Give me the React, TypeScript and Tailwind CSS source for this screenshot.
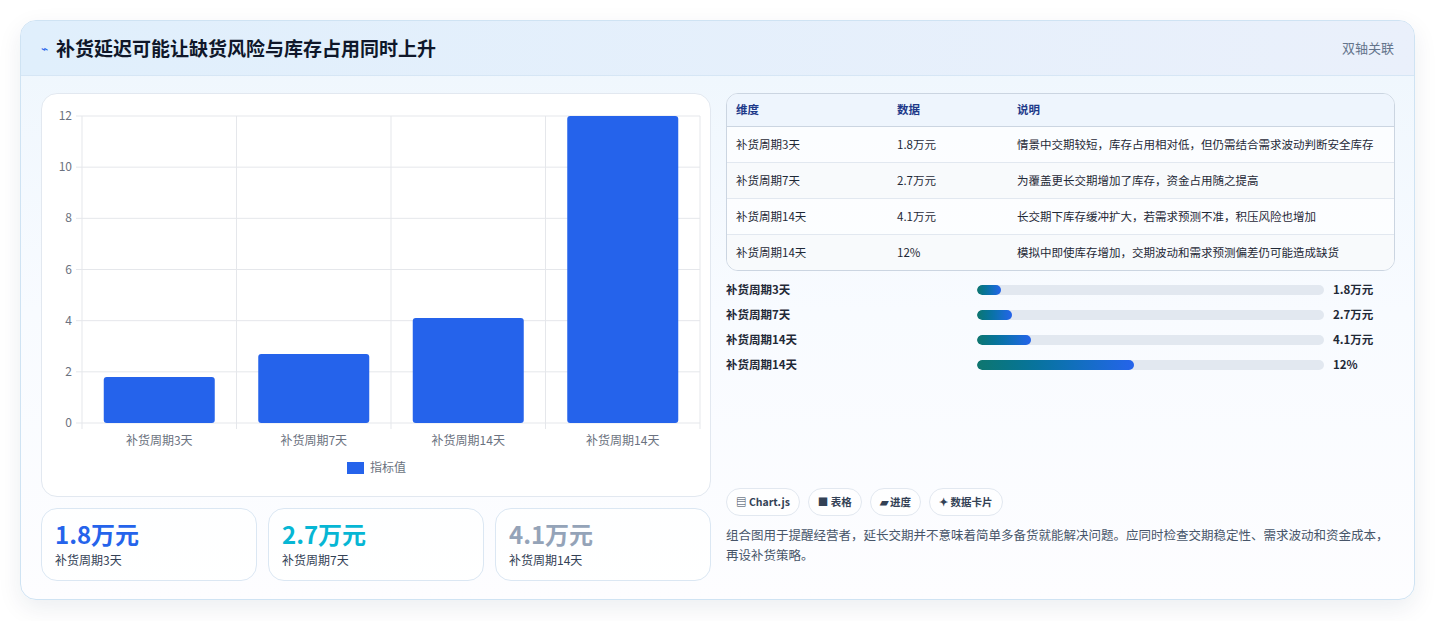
const font = { fontFamily: '"Noto Sans CJK SC", "Noto Sans", sans-serif' }

const rows = [
  { k: '补货周期3天', v: '1.8万元', d: '情景中交期较短，库存占用相对低，但仍需结合需求波动判断安全库存', p: 6.9 },
  { k: '补货周期7天', v: '2.7万元', d: '为覆盖更长交期增加了库存，资金占用随之提高', p: 10.1 },
  { k: '补货周期14天', v: '4.1万元', d: '长交期下库存缓冲扩大，若需求预测不准，积压风险也增加', p: 15.6 },
  { k: '补货周期14天', v: '12%', d: '模拟中即使库存增加，交期波动和需求预测偏差仍可能造成缺货', p: 45.2 },
]

function Chart() {
  const x0 = 40, x1 = 658, y0 = 22, y1 = 329
  const h = y1 - y0
  const vals = [1.8, 2.7, 4.1, 12]
  const labels = ['补货周期3天', '补货周期7天', '补货周期14天', '补货周期14天']
  const cw = (x1 - x0) / 4
  return (
    <svg width="670" height="402" className="block">
      {[0, 2, 4, 6, 8, 10, 12].map((t) => {
        const y = y1 - (t / 12) * h
        return (
          <g key={t}>
            <line x1={x0 - 6} x2={x1} y1={y} y2={y} stroke="#e5e7eb" />
            <text x={x0 - 10} y={y + 4} textAnchor="end" fontSize="12" fill="#6b7280" style={font}>{t}</text>
          </g>
        )
      })}
      {[0, 1, 2, 3, 4].map((i) => (
        <line key={i} x1={x0 + i * cw} x2={x0 + i * cw} y1={y0} y2={y1 + 6} stroke="#e5e7eb" />
      ))}
      {vals.map((v, i) => {
        const bh = (v / 12) * h
        const cx = x0 + cw * i + cw / 2
        return (
          <g key={i}>
            <rect x={cx - 55.5} y={y1 - bh} width="111" height={bh} rx="3" fill="#2563eb" />
            <text x={cx} y={y1 + 22} textAnchor="middle" fontSize="12" fill="#6b7280" style={font}>{labels[i]}</text>
          </g>
        )
      })}
      <rect x="305" y="368" width="17" height="12" fill="#2563eb" />
      <text x="328" y="378" fontSize="12" fill="#6b7280" style={font}>指标值</text>
    </svg>
  )
}

export default function App() {
  return (
    <div className="w-[1435px] h-[621px] bg-white pt-5 pl-5" style={font}>
      <div className="w-[1395px] h-[580px] rounded-2xl border border-[#cfe3f3] overflow-hidden bg-gradient-to-b from-[#eef6fd] via-[#f8fbff] to-[#fdfdff] shadow-[0_8px_24px_rgba(15,40,80,0.08)]">
        <div className="h-[55px] flex items-center justify-between px-5 bg-gradient-to-r from-[#e0effc] to-[#eaf0fb] border-b border-[#d6e6f5]">
          <div className="flex items-center gap-2">
            <span className="text-[#2563eb] text-xs">⌁</span>
            <span className="text-[19px] font-bold text-[#0f172a]">补货延迟可能让缺货风险与库存占用同时上升</span>
          </div>
          <span className="text-[13px] text-[#64748b]">双轴关联</span>
        </div>
        <div className="flex gap-[15px] px-5 pt-[17px]">
          <div className="w-[670px] flex flex-col gap-[11px]">
            <div className="h-[404px] rounded-2xl border border-[#e2e8f0] bg-white overflow-hidden">
              <Chart />
            </div>
            <div className="flex gap-[11px]">
              {[
                ['1.8万元', 'text-[#2563eb]', '补货周期3天'],
                ['2.7万元', 'text-[#06b6d4]', '补货周期7天'],
                ['4.1万元', 'text-[#94a3b8]', '补货周期14天'],
              ].map(([v, c, l]) => (
                <div key={v} className="w-[216px] h-[73px] rounded-2xl border border-[#dbe7f3] bg-white/70 px-[13px] pt-[10px]">
                  <div className={`text-[24px] font-bold leading-[30px] ${c}`}>{v}</div>
                  <div className="text-[12px] text-[#334155] mt-0.5">{l}</div>
                </div>
              ))}
            </div>
          </div>
          <div className="w-[670px] flex flex-col">
            <div className="rounded-xl border border-[#cbd5e1] bg-white/70 overflow-hidden text-[11.5px]">
              <div className="flex h-[33px] items-center bg-[#eef5fd] border-b border-[#cbd5e1] text-[#1e3a8a] font-semibold px-[9px]">
                <div className="w-[161px]">维度</div>
                <div className="w-[120px]">数据</div>
                <div>说明</div>
              </div>
              {rows.map((r, i) => (
                <div key={i} className={`flex px-[9px] py-[9px] text-[#1f2937] ${i < 3 ? 'border-b border-[#e2e8f0]' : ''} ${i % 2 ? 'bg-[#f8fafc]' : ''}`}>
                  <div className="w-[161px] shrink-0 leading-[17px]">{r.k}</div>
                  <div className="w-[120px] shrink-0 leading-[17px]">{r.v}</div>
                  <div className="w-[368px] leading-[17px]">{r.d}</div>
                </div>
              ))}
            </div>
            <div className="flex flex-col gap-[7px] mt-[10px]">
              {rows.map((r, i) => (
                <div key={i} className="flex items-center h-[18px] text-[11.5px] font-semibold text-[#1f2937]">
                  <div className="w-[251px]">{r.k}</div>
                  <div className="w-[347px] h-[10px] rounded-full bg-[#e2e8f0] overflow-hidden">
                    <div className="h-full rounded-full bg-gradient-to-r from-[#0f766e] to-[#2563eb]" style={{ width: `${r.p}%` }} />
                  </div>
                  <div className="ml-[9px]">{r.v}</div>
                </div>
              ))}
            </div>
            <div className="flex gap-2 mt-[114px]">
              {['▤ Chart.js', '■ 表格', '▰ 进度', '✦ 数据卡片'].map((t) => (
                <span key={t} className="h-[28px] px-[9px] flex items-center rounded-full border border-[#e2e8f0] bg-white/80 text-[10.5px] font-semibold text-[#334155]">{t}</span>
              ))}
            </div>
            <p className="mt-[9px] text-[12.5px] leading-[20px] text-[#475569]">组合图用于提醒经营者，延长交期并不意味着简单多备货就能解决问题。应同时检查交期稳定性、需求波动和资金成本，再设补货策略。</p>
          </div>
        </div>
      </div>
    </div>
  )
}
